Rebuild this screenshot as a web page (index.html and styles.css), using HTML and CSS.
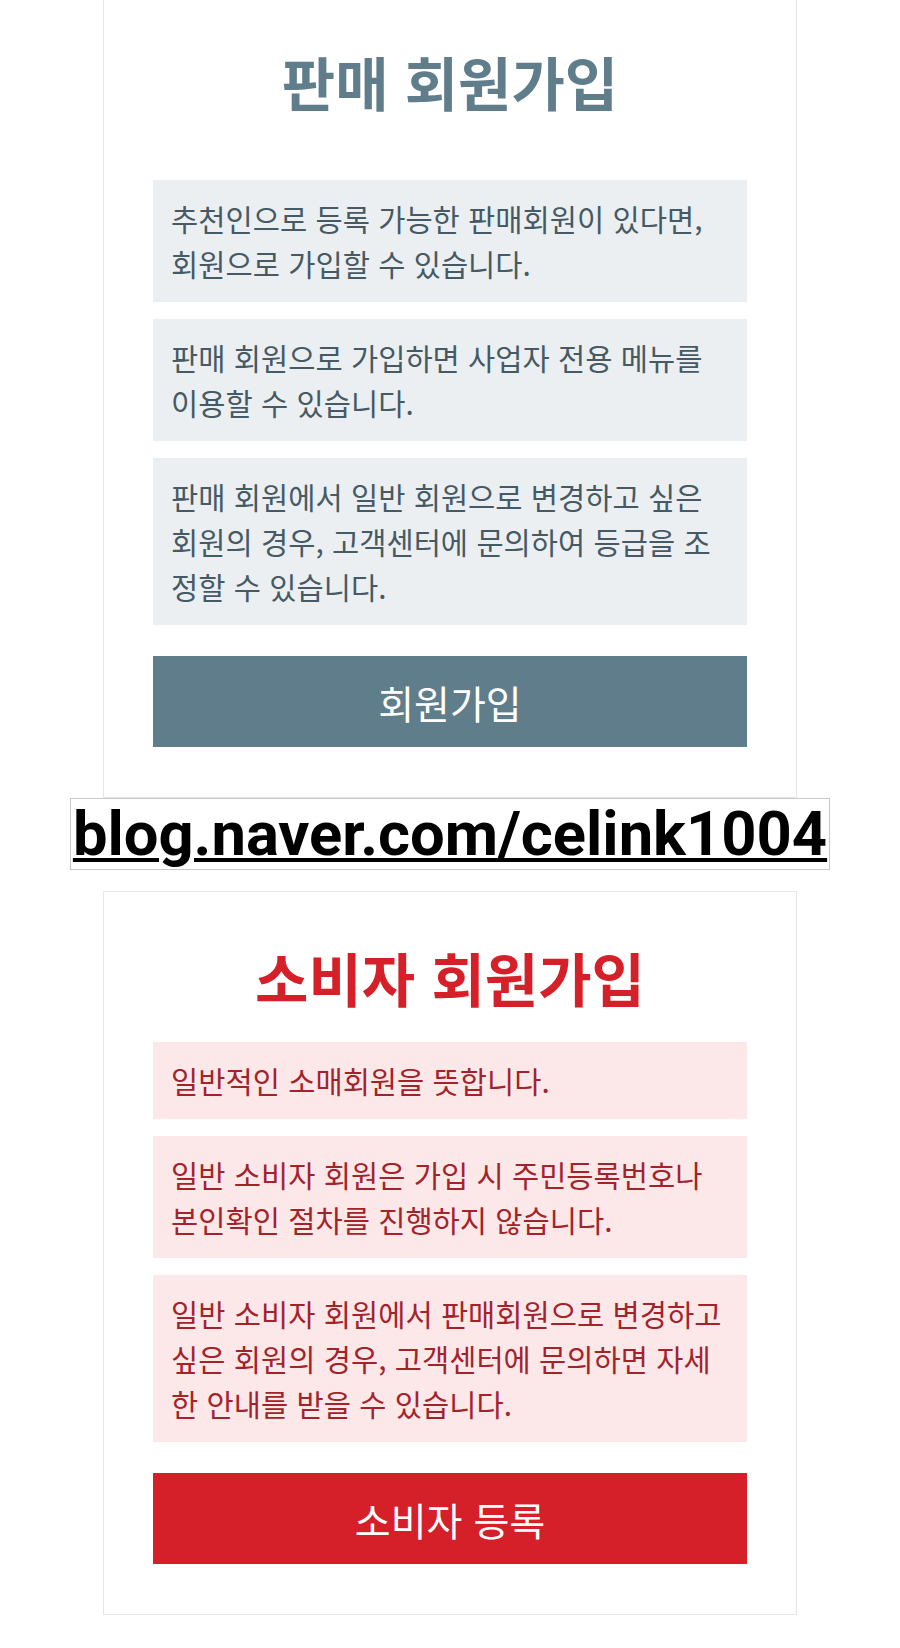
FILE: index.html
```html
<!DOCTYPE html>
<html lang="ko">
<head>
    <meta charset="UTF-8">
    <meta name="viewport" content="width=device-width, initial-scale=1.0">
    <title>회원가입</title>
    <link rel="stylesheet" href="styles.css">
</head>
<body>
    <main class="signup">
        <section class="signup-card signup-card--seller">
            <h2 class="signup-title">판매 회원가입</h2>
            <ul class="notice-list">
                <li class="notice">추천인으로 등록 가능한 판매회원이 있다면, 회원으로 가입할 수 있습니다.</li>
                <li class="notice">판매 회원으로 가입하면 사업자 전용 메뉴를 이용할 수 있습니다.</li>
                <li class="notice">판매 회원에서 일반 회원으로 변경하고 싶은 회원의 경우, 고객센터에 문의하여 등급을 조정할 수 있습니다.</li>
            </ul>
            <button type="button" class="signup-btn">회원가입</button>
        </section>

        <div class="blog-link">
            <a href="#">blog.naver.com/celink1004</a>
        </div>

        <section class="signup-card signup-card--consumer">
            <h2 class="signup-title">소비자 회원가입</h2>
            <ul class="notice-list">
                <li class="notice">일반적인 소매회원을 뜻합니다.</li>
                <li class="notice">일반 소비자 회원은 가입 시 주민등록번호나 본인확인 절차를 진행하지 않습니다.</li>
                <li class="notice">일반 소비자 회원에서 판매회원으로 변경하고 싶은 회원의 경우, 고객센터에 문의하면 자세한 안내를 받을 수 있습니다.</li>
            </ul>
            <button type="button" class="signup-btn">소비자 등록</button>
        </section>
    </main>
</body>
</html>
```

FILE: styles.css
```css
body {
    margin: 0;
    padding: 0;
    background-color: #fff;
    font-family: "Noto Sans CJK KR", "Noto Sans", sans-serif;
}
.signup {
    display: flex;
    flex-direction: column;
    align-items: center;
}
.signup-card {
    box-sizing: border-box;
    width: 694px;
    padding: 50px 49px 50px;
    border: 1px solid #e6e6e6;
    background-color: #fff;
}
.signup-card--seller {
    margin-top: -5px;
}
.signup-card--consumer {
    margin-top: 21px;
}
.signup-title {
    margin: 0 0 30px;
    font-size: 58px;
    line-height: 70px;
    font-weight: 700;
    text-align: center;
}
.signup-card--seller .signup-title {
    margin-bottom: 64px;
    color: #607d8b;
}
.signup-card--consumer .signup-title {
    color: #d52029;
}
.notice-list {
    display: flex;
    flex-direction: column;
    gap: 17px;
    margin: 0;
    padding: 0;
    list-style: none;
}
.notice {
    padding: 16px 17px 16px 18px;
    font-size: 29.6px;
    line-height: 45px;
}
.signup-card--seller .notice {
    background-color: #eceff1;
    color: #455a64;
}
.signup-card--consumer .notice {
    background-color: #fce8e9;
    color: #a3232b;
}
.signup-btn {
    display: block;
    width: 100%;
    height: 91px;
    margin-top: 31px;
    border: none;
    color: #fff;
    font-family: "Noto Sans CJK KR", "Noto Sans", sans-serif;
    font-size: 39px;
    font-weight: 400;
    cursor: pointer;
}
.signup-card--seller .signup-btn {
    background-color: #607d8b;
}
.signup-card--consumer .signup-btn {
    background-color: #d52029;
}
/* blog address strip between the two cards */
.blog-link {
    box-sizing: border-box;
    width: 760px;
    height: 72px;
    border: 1px solid #c8c8c8;
    background-color: #fff;
    text-align: center;
    white-space: nowrap;
}
.blog-link a {
    color: #000;
    font-family: Roboto, "Liberation Sans", sans-serif;
    font-size: 61.5px;
    font-weight: 700;
    line-height: 70px;
    text-decoration: underline;
    text-decoration-thickness: 4px;
    text-underline-offset: 3px;
}
```
